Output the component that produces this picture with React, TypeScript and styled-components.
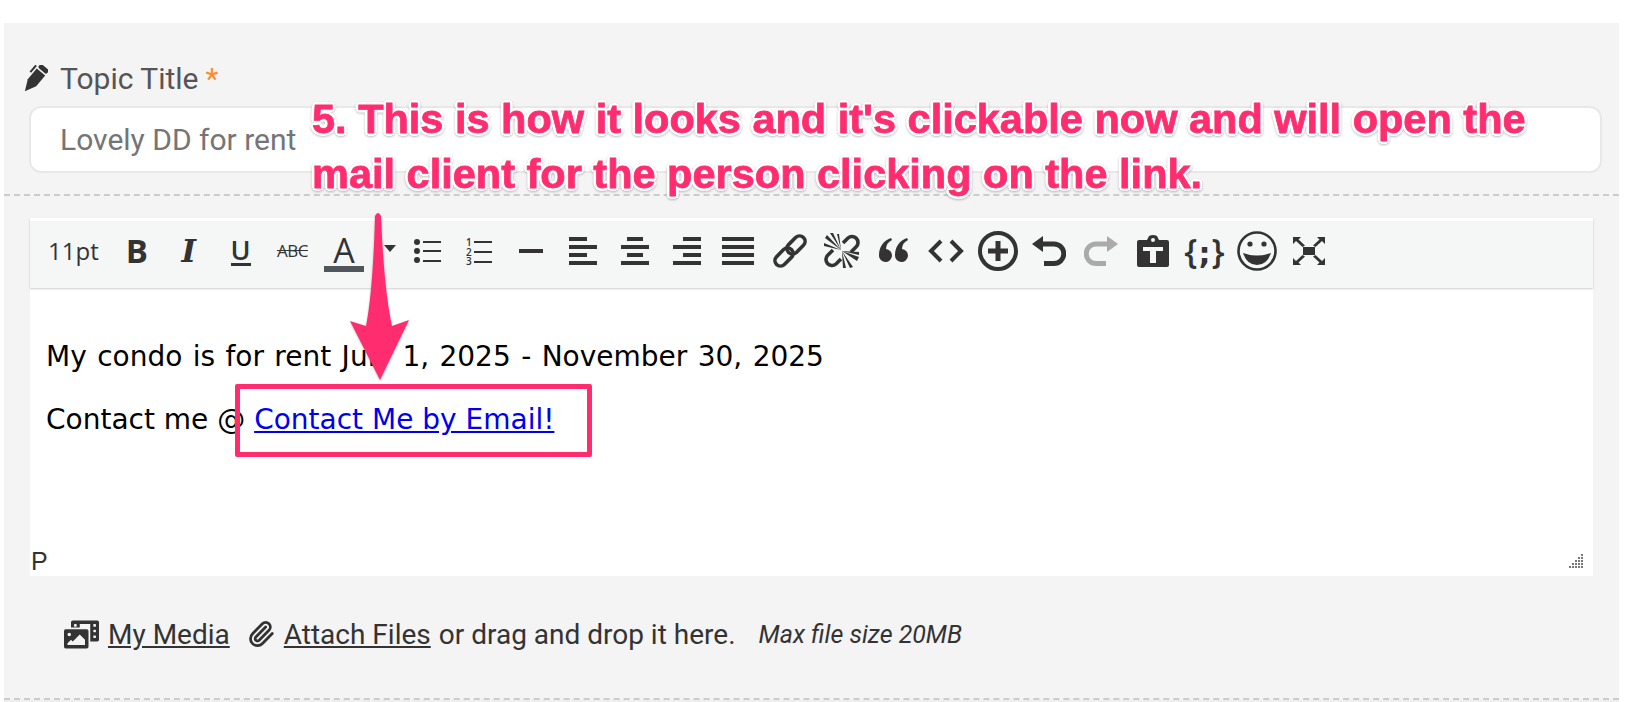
import React from "react";
import styled, { createGlobalStyle } from "styled-components";
import { FaPhotoVideo } from "react-icons/fa";
import { Paperclip } from "lucide-react";

const Global = createGlobalStyle`
  html, body { margin: 0; padding: 0; background: #fff; }
  body { width: 1634px; height: 702px; overflow: hidden; font-family: Roboto, "Liberation Sans", sans-serif; }
`;

const Page = styled.div`
  position: relative;
  width: 1634px;
  height: 702px;
  padding: 23px 15px 0 4px;
  box-sizing: border-box;
  overflow: hidden;
`;
const Panel = styled.div`
  background: #f4f4f4;
  height: 677px;
  display: flex;
  flex-direction: column;
`;
const TitleSection = styled.section`
  height: 173px;
  padding: 41px 17px 0 25px;
  box-sizing: border-box;
  border-bottom: 2px dashed #cccccc;
`;
const Label = styled.label`
  display: flex;
  align-items: center;
  height: 28px;
  margin-left: -6px;
  font-size: 30px;
  color: #555;
  svg { margin-right: 12px; }
`;
const Required = styled.span`
  color: #ff8c2a;
  margin-left: 7px;
`;
const TitleInput = styled.div`
  margin-top: 14px;
  height: 67px;
  box-sizing: border-box;
  background: #fff;
  border: 2px solid #e8e8e8;
  border-radius: 12px;
  padding-left: 29px;
  display: flex;
  align-items: center;
  font-size: 30px;
  color: #757575;
`;
const EditorSection = styled.section`
  flex: 1;
  padding: 22px 26px 0 26px;
  box-sizing: border-box;
  border-bottom: 2px dashed #cccccc;
`;
const Toolbar = styled.div`
  height: 70px;
  box-sizing: border-box;
  border-top: 3px solid #fff;
  padding-bottom: 8px;
  background: #f5f7f7;
  box-shadow: 0 1px 2px rgba(0, 0, 0, 0.2);
  display: flex;
  align-items: center;
  position: relative;
  color: #333;
`;
const ToolBtn = styled.div<{ $w?: number }>`
  width: ${(p) => p.$w ?? 51.85}px;
  height: 44px;
  flex: none;
  display: flex;
  align-items: center;
  justify-content: center;
  color: #333;
`;
const SizeBtn = styled(ToolBtn)`
  font-size: 24px;
  font-family: "Open Sans", sans-serif;
  justify-content: flex-start;
  padding-left: 18px;
  box-sizing: border-box;
`;
const BoldGlyph = styled.span`
  font: 700 33px "Open Sans", sans-serif;
`;
const ItalicGlyph = styled.span`
  font: italic 700 31px "DejaVu Serif", serif;
`;
const UnderGlyph = styled.span`
  font: 600 27px/28px "Open Sans", sans-serif;
  border-bottom: 3px solid #333;
  height: 27px;
  display: block;
`;
const StrikeGlyph = styled.span`
  font: 400 17px "Open Sans", sans-serif;
  text-decoration: line-through;
  letter-spacing: -0.5px;
`;
const ColorGlyph = styled.span`
  font: 400 34px/36px "Open Sans", sans-serif;
  display: block;
  width: 40px;
  text-align: center;
  height: 40px;
  box-sizing: border-box;
  border-bottom: 6px solid #50565c;
  margin-top: 3px;
`;
const Caret = styled.span`
  width: 0;
  height: 0;
  border-left: 6px solid transparent;
  border-right: 6px solid transparent;
  border-top: 7px solid #333;
  margin-left: 20px;
  margin-top: -4px;
`;
const BracesGlyph = styled.span`
  font: 600 34px "Open Sans", sans-serif;
  letter-spacing: 1px;
`;
const Semi = styled.b`
  font: 700 30px "DejaVu Sans", sans-serif;
`;
const Content = styled.div`
  height: 288px;
  background: #fff;
  display: flex;
  flex-direction: column;
`;
const Body = styled.div`
  flex: 1;
  padding: 50px 0 0 16px;
  font: 400 28px/37px "DejaVu Sans", Verdana, sans-serif;
  color: #000;
`;
const Para = styled.p<{ $spread?: number }>`
  margin: 0 0 26px;
  white-space: nowrap;
  word-spacing: ${(p) => p.$spread ?? 0}px;
`;
const MailLink = styled.a`
  color: #0000ee;
  text-decoration: underline;
`;
const Status = styled.div`
  height: 36px;
  padding: 6px 9px 0 1px;
  box-sizing: border-box;
  display: flex;
  justify-content: space-between;
  align-items: center;
  font: 400 25px "Liberation Sans", sans-serif;
  color: #333;
`;
const Attach = styled.div`
  display: flex;
  align-items: center;
  height: 116px;
  padding: 0 0 0 34px;
  font-size: 28px;
  color: #333;
  white-space: nowrap;
`;
const AttachLink = styled.a`
  color: #333;
  text-decoration: underline;
  margin-left: 9px;
`;
const Plain = styled.span`
  margin-left: 8px;
`;
const MaxSize = styled.em`
  margin-left: 23px;
  font-size: 25px;
`;
const ClipWrap = styled.span`
  display: inline-flex;
  margin-left: 17px;
`;
const BottomStrip = styled.div`
  height: 2px;
  background: #eeeeee;
`;

const Note = styled.div`
  position: absolute;
  left: 312px;
  top: 92px;
  font: 700 41.5px/54.5px "Liberation Sans", Arial, sans-serif;
  color: #ff2d6f;
  white-space: nowrap;
  -webkit-text-stroke: 0.8px #ff2d6f;
  text-shadow:
    3px 0 0 #fff, -3px 0 0 #fff, 0 3px 0 #fff, 0 -3px 0 #fff,
    2.1px 2.1px 0 #fff, -2.1px 2.1px 0 #fff, 2.1px -2.1px 0 #fff, -2.1px -2.1px 0 #fff;
  filter: drop-shadow(0 1px 1px rgba(0, 0, 0, 0.25));
`;
const ArrowSvg = styled.svg`
  position: absolute;
  left: 340px;
  top: 210px;
  filter: drop-shadow(0 1px 1px rgba(0, 0, 0, 0.25));
`;
const Frame = styled.div`
  position: absolute;
  left: 235px;
  top: 384px;
  width: 357px;
  height: 73px;
  box-sizing: border-box;
  border: 5px solid #ff2d6f;
  border-radius: 2px;
`;
const NumSvg = styled.svg`
  overflow: visible;
`;

const PencilIcon = () => (
  <svg width="25" height="27" viewBox="0 0 25 27" fill="#333">
    <g transform="rotate(40 12.5 13.5)">
      <rect x="7" y="-1.5" width="11" height="5" rx="2" />
      <path d="M7 5 H18 V19 L12.5 30 L7 19 Z" />
      <rect x="3.5" y="3" width="2" height="9" />
    </g>
  </svg>
);
const Align = ({ rows, w = 28 }: { rows: [number, number][]; w?: number }) => (
  <svg width={w} height="28" viewBox={`0 0 ${w} 28`} fill="#333">
    {rows.map(([x, rw], i) => (
      <rect key={i} x={x} y={i * 8} width={rw} height="4" />
    ))}
  </svg>
);

const Bullets = () => (
  <svg width="28" height="24" viewBox="0 0 28 24" fill="#333">
    <circle cx="4" cy="3" r="3" /><circle cx="4" cy="12" r="3" /><circle cx="4" cy="21" r="3" />
    <rect x="10" y="2" width="18" height="2" /><rect x="10" y="11" width="18" height="2" /><rect x="10" y="21" width="18" height="2" />
  </svg>
);
const Numbers = () => (
  <NumSvg width="28" height="28" viewBox="0 0 28 28" fill="#333" fontFamily="Open Sans" fontSize="10" fontWeight="600">
    <text x="1" y="9">1</text><text x="1" y="18.5">2</text><text x="1" y="28">3</text>
    <rect x="9" y="4" width="18" height="2" /><rect x="9" y="14" width="18" height="2" /><rect x="9" y="24" width="18" height="2" />
  </NumSvg>
);
const LinkIcon = () => (
  <svg width="36" height="36" viewBox="0 0 36 36" fill="none" stroke="#333" strokeWidth="3.6">
    <g transform="rotate(-45 18 18)">
      <rect x="-1" y="12.5" width="21" height="11" rx="5.5" />
      <rect x="16" y="12.5" width="21" height="11" rx="5.5" />
    </g>
  </svg>
);
const UnlinkIcon = () => (
  <svg width="36" height="36" viewBox="0 0 36 36" fill="#333">
    <g fill="none" stroke="#333" strokeWidth="3.6">
      <path d="M19 10 L24 5 A6 6 0 0 1 32 14 L27 19" />
      <path d="M17 26 L12 31 A6 6 0 0 1 4 22 L9 17" />
    </g>
    <path d="M17 17 L1 5 L3 2 Z M17 17 L6 0 L9 0 Z M17 17 L13 1 L15 1 Z M17 17 L0 10 L0 13 Z" />
    <path d="M18 18 L35 24 L33 28 Z M18 18 L29 34 L26 35 Z M18 18 L22 35 L19 35 Z M18 18 L35 19 L35 22 Z" />
  </svg>
);
const QuoteIcon = () => (
  <svg width="30" height="26" viewBox="0 0 30 26" fill="#333">
    <path d="M12 0 C4 3 0 9 0 17 A6.5 6.5 0 1 0 7 11 C7 7 9 4 13 2 Z" />
    <path d="M28 0 C20 3 16 9 16 17 A6.5 6.5 0 1 0 23 11 C23 7 25 4 29 2 Z" />
  </svg>
);
const CodeIcon = () => (
  <svg width="36" height="24" viewBox="0 0 36 24" fill="none" stroke="#333" strokeWidth="4">
    <path d="M13 2 L3 12 L13 22" /><path d="M23 2 L33 12 L23 22" />
  </svg>
);
const PlusIcon = () => (
  <svg width="40" height="40" viewBox="0 0 40 40">
    <circle cx="20" cy="20" r="18" fill="none" stroke="#333" strokeWidth="4" />
    <path d="M17.5 10 h5 v7.5 h7.5 v5 h-7.5 v7.5 h-5 v-7.5 h-7.5 v-5 h7.5 z" fill="#333" />
  </svg>
);
const UndoIcon = ({ color = "#333", flip = false }: { color?: string; flip?: boolean }) => (
  <svg width="34" height="30" viewBox="0 0 34 30" style={flip ? { transform: "scaleX(-1)" } : undefined}>
    <path d="M0 8 L11 0 V16 Z" fill={color} />
    <path d="M10 8 H22 A9.5 9.5 0 0 1 22 27.5 H12" fill="none" stroke={color} strokeWidth="5" />
  </svg>
);
const PasteIcon = () => (
  <svg width="32" height="32" viewBox="0 0 32 32" fill="#333">
    <path fillRule="evenodd" d="M2 5 H10 L12 1 Q16 -1 20 1 L22 5 H30 Q32 5 32 7 V30 Q32 32 30 32 H2 Q0 32 0 30 V7 Q0 5 2 5 Z M16 3 A2 2 0 1 0 16 7 A2 2 0 1 0 16 3 Z M6 12 V16 H13 V28 H19 V16 H26 V12 Z" />
  </svg>
);
const SmileIcon = () => (
  <svg width="40" height="40" viewBox="0 0 40 40">
    <circle cx="20" cy="20" r="18.5" fill="none" stroke="#333" strokeWidth="2.6" />
    <circle cx="13" cy="13" r="2.6" fill="#333" /><circle cx="27" cy="13" r="2.6" fill="#333" />
    <path d="M6 22 Q20 27 34 22 Q30 34 20 34 Q10 34 6 22 Z" fill="#333" />
  </svg>
);
const FullIcon = () => (
  <svg width="32" height="28" viewBox="0 0 32 28" fill="#333">
    <rect x="10" y="10" width="12" height="8" />
    <path d="M0 0 H8 L5.5 2.5 L12 8.5 L9.5 10 L3 4 L0 7 Z" />
    <path d="M32 0 H24 L26.5 2.5 L20 8.5 L22.5 10 L29 4 L32 7 Z" />
    <path d="M0 28 H8 L5.5 25.5 L12 19.5 L9.5 18 L3 24 L0 21 Z" />
    <path d="M32 28 H24 L26.5 25.5 L20 19.5 L22.5 18 L29 24 L32 21 Z" />
  </svg>
);
const Grip = () => (
  <svg width="16" height="16" viewBox="0 0 16 16" fill="#777">
    {[[13],[10,13],[7,10,13],[4,7,10,13],[1,4,7,10,13]].map((xs, r) =>
      xs.map((x) => <rect key={`${r}-${x}`} x={x} y={r * 3 + 1} width="2" height="2" />)
    )}
  </svg>
);

export default function App() {
  return (
    <Page>
      <Global />
      <Panel>
        <TitleSection>
          <Label>
            <PencilIcon />
            Topic Title<Required>*</Required>
          </Label>
          <TitleInput>Lovely DD for rent</TitleInput>
        </TitleSection>
        <EditorSection>
          <Toolbar>
            <SizeBtn $w={81}>11pt</SizeBtn>
            <ToolBtn><BoldGlyph>B</BoldGlyph></ToolBtn>
            <ToolBtn><ItalicGlyph>I</ItalicGlyph></ToolBtn>
            <ToolBtn><UnderGlyph>U</UnderGlyph></ToolBtn>
            <ToolBtn><StrikeGlyph>ABC</StrikeGlyph></ToolBtn>
            <ToolBtn $w={83}><ColorGlyph>A</ColorGlyph><Caret /></ToolBtn>
            <ToolBtn><Bullets /></ToolBtn>
            <ToolBtn><Numbers /></ToolBtn>
            <ToolBtn><svg width="24" height="4"><rect width="24" height="4" fill="#333" /></svg></ToolBtn>
            <ToolBtn><Align rows={[[0, 18], [0, 28], [0, 18], [0, 28]]} /></ToolBtn>
            <ToolBtn><Align rows={[[6, 16], [0, 28], [6, 16], [0, 28]]} /></ToolBtn>
            <ToolBtn><Align rows={[[10, 18], [0, 28], [10, 18], [0, 28]]} /></ToolBtn>
            <ToolBtn><Align w={32} rows={[[0, 32], [0, 32], [0, 32], [0, 32]]} /></ToolBtn>
            <ToolBtn><LinkIcon /></ToolBtn>
            <ToolBtn><UnlinkIcon /></ToolBtn>
            <ToolBtn><QuoteIcon /></ToolBtn>
            <ToolBtn><CodeIcon /></ToolBtn>
            <ToolBtn><PlusIcon /></ToolBtn>
            <ToolBtn><UndoIcon /></ToolBtn>
            <ToolBtn><UndoIcon color="#aaa" flip /></ToolBtn>
            <ToolBtn><PasteIcon /></ToolBtn>
            <ToolBtn><BracesGlyph>{"{"}<Semi>;</Semi>{"}"}</BracesGlyph></ToolBtn>
            <ToolBtn><SmileIcon /></ToolBtn>
            <ToolBtn><FullIcon /></ToolBtn>
          </Toolbar>
          <Content>
            <Body>
              <Para $spread={1.5}>My condo is for rent July 1, 2025 - November 30, 2025</Para>
              <Para>Contact me @ <MailLink>Contact Me by Email!</MailLink></Para>
            </Body>
            <Status><span>P</span><Grip /></Status>
          </Content>
          <Attach>
            <FaPhotoVideo size={35} />
            <AttachLink>My Media</AttachLink>
            <ClipWrap><Paperclip size={28} strokeWidth={2.4} /></ClipWrap>
            <AttachLink>Attach Files</AttachLink>
            <Plain>or drag and drop it here.</Plain>
            <MaxSize>Max file size 20MB</MaxSize>
          </Attach>
        </EditorSection>
      </Panel>
      <BottomStrip />
      <Note>
        5. This is how it looks and it's clickable now and will open the<br />
        mail client for the person clicking on the link.
      </Note>
      <ArrowSvg width="80" height="176" viewBox="0 0 80 176">
        <path d="M35 6 Q38 0 41 6 Q44 80 52 116 L69 110 L40 170 L10 111 L26 116 Q33 80 35 6 Z" fill="#ff2d6f" />
      </ArrowSvg>
      <Frame />
    </Page>
  );
}
